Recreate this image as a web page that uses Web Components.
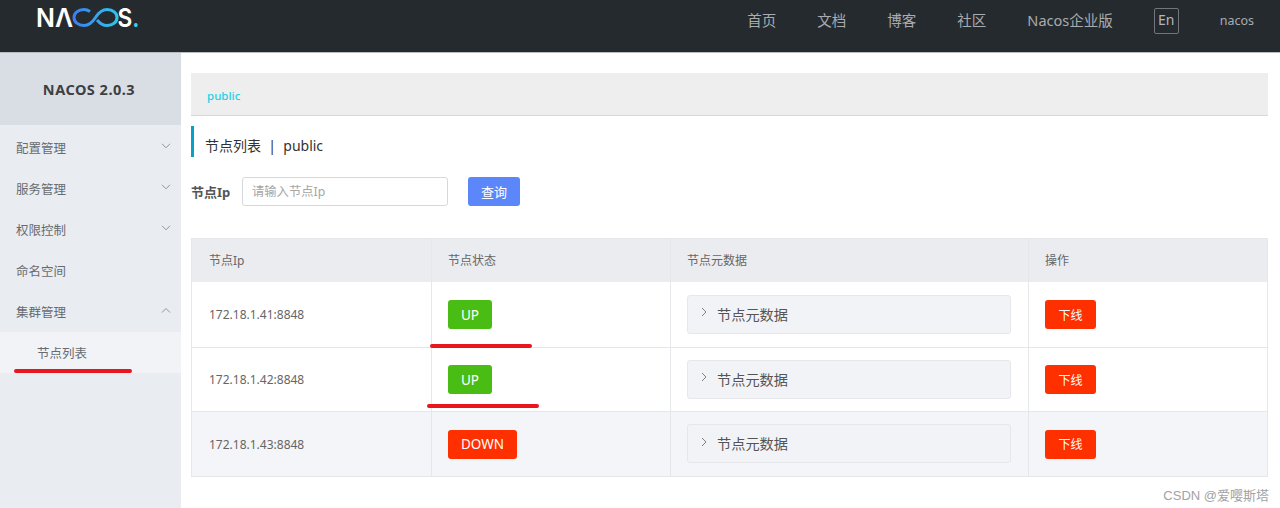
<!DOCTYPE html>
<html lang="zh-CN">
<head>
<meta charset="utf-8">
<title>Nacos</title>
<style>
  html, body { margin: 0; height: 100%; background: #fff; }
  body { font-family: "Noto Sans", "Noto Sans CJK SC", sans-serif; overflow: hidden; }
</style>
</head>
<body>
<nacos-app></nacos-app>

<script>
const CHEVRON = dir => `<svg width="10" height="6" viewBox="0 0 10 6" fill="none" stroke="#8f959c" stroke-width="1">
  <path d="${dir === 'up' ? 'M1 5.5 5 1.5 9 5.5' : 'M1 .8 5 4.8 9 .8'}"/></svg>`

class NacosHeader extends HTMLElement {
  constructor () {
    super()
    this.attachShadow({ mode: 'open' })
  }

  connectedCallback () {
    this.shadowRoot.innerHTML = /* html */`
      <style>
        :host {
          display: flex;
          box-sizing: border-box;
          height: 53px;
          background: #252a2f;
          border-bottom: 1px solid #b9bcbf;
          color: #a9acaf;
          font-size: 14.5px;
          line-height: 20px;
        }
        .logo { margin: 7px 0 0 36px; width: 102px; height: 24px; display: block; overflow: visible; }
        .logo text { font-family: Inter, sans-serif; font-size: 26px; font-weight: 600; fill: #fff; }
        .logo .dot { fill: #2fd3e6; }
        nav { display: flex; margin: 10px 0 0 auto; padding-right: 26px; }
        a { margin-right: 41px; white-space: nowrap; }
        .en {
          box-sizing: border-box;
          width: 25px;
          height: 26px;
          margin: -2px 41px 0 0;
          border: 1px solid #72767a;
          border-radius: 2px;
          text-align: center;
          font-size: 14px;
          line-height: 22px;
          color: #b3b6b8;
        }
        .user { font-size: 12.5px; margin-top: 1px; }
      </style>
      <svg class="logo" viewBox="0 0 102 24">
        <defs>
          <linearGradient id="inf" gradientUnits="userSpaceOnUse" x1="38" x2="81" y1="0" y2="0">
            <stop offset="0" stop-color="#3b7ff2"/>
            <stop offset="1" stop-color="#2fc6ea"/>
          </linearGradient>
        </defs>
        <text x="0" y="20" textLength="37" lengthAdjust="spacingAndGlyphs">NΛ</text>
        <path d="M54 4.500C52 3.200 50 2.500 48 2.500 42 2.500 38 6 38 10.500S42 18.500 48 18.500C53 18.500 56 16 59.500 10.500 63 5 66 2.500 71 2.500 77 2.500 81 6 81 10.500S77 18.500 71 18.500C66 18.500 63.500 16 61 13"
          fill="none" stroke="url(#inf)" stroke-width="3"/>
        <text x="81.500" y="20" textLength="22" lengthAdjust="spacingAndGlyphs">S<tspan class="dot">.</tspan></text>
      </svg>
      <nav>
        <a>首页</a><a>文档</a><a>博客</a><a>社区</a>
        <a>Nacos企业版</a>
        <span class="en">En</span>
        <span class="user">nacos</span>
      </nav>
    `
  }
}

class SideItem extends HTMLElement {
  constructor () {
    super()
    this.attachShadow({ mode: 'open' })
  }

  connectedCallback () {
    const arrow = this.getAttribute('arrow')
    this.shadowRoot.innerHTML = /* html */`
      <style>
        :host {
          display: flex;
          align-items: center;
          justify-content: space-between;
          box-sizing: border-box;
          height: 41px;
          padding: 0 10px 1px 16px;
          font-size: 12.5px;
          color: #666b70;
        }
        :host([sub]) { padding-left: 37px; background: #f2f3f7; }
        svg { margin-top: -3px; }
      </style>
      <slot></slot>
      ${arrow ? CHEVRON(arrow) : ''}
    `
  }
}

class NacosSidebar extends HTMLElement {
  constructor () {
    super()
    this.attachShadow({ mode: 'open' })
  }

  connectedCallback () {
    this.shadowRoot.innerHTML = /* html */`
      <style>
        :host {
          display: block;
          flex: none;
          width: 181px;
          background: #e9edf2;
        }
        .version {
          box-sizing: border-box;
          height: 72px;
          padding-right: 3px;
          background: #d9dee4;
          text-align: center;
          font-size: 14.5px;
          font-weight: 700;
          line-height: 73px;
          letter-spacing: .5px;
          color: #3d4043;
        }
        .menu { margin-top: 2px; }
      </style>
      <div class="version">NACOS 2.0.3</div>
      <div class="menu">
        <side-item arrow="down">配置管理</side-item>
        <side-item arrow="down">服务管理</side-item>
        <side-item arrow="down">权限控制</side-item>
        <side-item>命名空间</side-item>
        <side-item arrow="up">集群管理</side-item>
        <side-item sub>节点列表</side-item>
      </div>
    `
  }
}

class CrumbBar extends HTMLElement {
  constructor () {
    super()
    this.attachShadow({ mode: 'open' })
  }

  connectedCallback () {
    this.shadowRoot.innerHTML = /* html */`
      <style>
        :host {
          display: flex;
          align-items: center;
          box-sizing: border-box;
          height: 43px;
          padding: 3px 0 0 16px;
          background: #eeeeee;
          border-bottom: 1px solid #d9d9d9;
          font-size: 11.5px;
          font-weight: 500;
          color: #1fd0e6;
        }
      </style>
      <slot></slot>
    `
  }
}

class PageTitle extends HTMLElement {
  constructor () {
    super()
    this.attachShadow({ mode: 'open' })
  }

  connectedCallback () {
    this.shadowRoot.innerHTML = /* html */`
      <style>
        :host {
          display: flex;
          align-items: center;
          box-sizing: border-box;
          height: 31px;
          margin-top: 10px;
          padding: 6px 0 0 11px;
          border-left: 3px solid #09a0c8;
          font-size: 14px;
          color: #333;
        }
        slot { white-space: pre; }
      </style>
      <slot></slot>
    `
  }
}

class SearchForm extends HTMLElement {
  constructor () {
    super()
    this.attachShadow({ mode: 'open' })
  }

  connectedCallback () {
    this.shadowRoot.innerHTML = /* html */`
      <style>
        :host {
          display: flex;
          align-items: center;
          height: 29px;
          margin-top: 20px;
          font-size: 12.3px;
        }
        label { width: 51px; font-size: 13px; font-weight: 700; color: #555; }
        .input {
          box-sizing: border-box;
          width: 206px;
          height: 29px;
          padding-left: 9px;
          border: 1px solid #d6d8de;
          border-radius: 3px;
          line-height: 27px;
          color: #a6a6a6;
        }
        button {
          box-sizing: border-box;
          width: 52px;
          height: 29px;
          margin-left: 20px;
          padding: 0;
          border: 0;
          border-radius: 3px;
          background: #5b87fb;
          color: #fff;
          font: inherit;
          font-size: 13px;
        }
      </style>
      <label>节点Ip</label>
      <div class="input">请输入节点Ip</div>
      <button>查询</button>
    `
  }
}

class StatusTag extends HTMLElement {
  constructor () {
    super()
    this.attachShadow({ mode: 'open' })
  }

  connectedCallback () {
    this.shadowRoot.innerHTML = /* html */`
      <style>
        :host {
          display: inline-flex;
          align-items: center;
          box-sizing: border-box;
          height: 29px;
          padding: 0 13px;
          border-radius: 3px;
          background: #ff3000;
          color: #fff;
          font-size: 13.5px;
        }
        :host([state="up"]) { background: #4abd14; }
        :host([small]) { padding: 0 13.5px; font-size: 12px; }
      </style>
      <slot></slot>
    `
  }
}

class MetaCollapse extends HTMLElement {
  constructor () {
    super()
    this.attachShadow({ mode: 'open' })
  }

  connectedCallback () {
    this.shadowRoot.innerHTML = /* html */`
      <style>
        :host {
          display: flex;
          align-items: center;
          gap: 10px;
          box-sizing: border-box;
          height: 39px;
          padding: 0 0 1px 13px;
          background: #f2f3f7;
          border: 1px solid #e6e7eb;
          border-radius: 3px;
          font-size: 14.2px;
          color: #555;
        }
        svg { margin-top: -3px; }
      </style>
      <svg width="6" height="10" viewBox="0 0 6 10" fill="none" stroke="#7d8186" stroke-width="1">
        <path d="M1 1 5 5 1 9"/>
      </svg>
      <slot></slot>
    `
  }
}

class NodeRow extends HTMLElement {
  constructor () {
    super()
    this.attachShadow({ mode: 'open' })
  }

  connectedCallback () {
    this.shadowRoot.innerHTML = /* html */`
      <style>
        :host {
          display: grid;
          grid-template-columns: 239px 239px 358px 1fr;
          border-bottom: 1px solid #e6e7eb;
          font-size: 12px;
          color: #666;
        }
        :host([head]) { background: #ebecf0; border-bottom: 0; --cell-pb: 2px; }
        :host([alt]) { background: #f4f5f8; }
      </style>
      <slot></slot>
    `
  }
}

class NodeCell extends HTMLElement {
  constructor () {
    super()
    this.attachShadow({ mode: 'open' })
  }

  connectedCallback () {
    this.shadowRoot.innerHTML = /* html */`
      <style>
        :host {
          display: flex;
          align-items: center;
          box-sizing: border-box;
          min-width: 0;
          height: var(--row-h, 64px);
          padding: 0 16px var(--cell-pb, 0);
          border-left: 1px solid #e6e7eb;
        }
        :host(:first-child) { border-left: 0; padding-left: 17px; }
        ::slotted(meta-collapse) { flex: 1; margin: 0 1px 1px 0; }
      </style>
      <slot></slot>
    `
  }
}

class NodeTable extends HTMLElement {
  constructor () {
    super()
    this.attachShadow({ mode: 'open' })
  }

  connectedCallback () {
    const nodes = [
      ['172.18.1.41:8848', 'up', 'UP', 65],
      ['172.18.1.42:8848', 'up', 'UP', 63],
      ['172.18.1.43:8848', 'down', 'DOWN', 64]
    ]
    const rows = nodes.map((n, i) => /* html */`
      <node-row ${i === 2 ? 'alt' : ''} style="--row-h:${n[3]}px">
        <node-cell>${n[0]}</node-cell>
        <node-cell><status-tag state="${n[1]}">${n[2]}</status-tag></node-cell>
        <node-cell><meta-collapse>节点元数据</meta-collapse></node-cell>
        <node-cell><status-tag small>下线</status-tag></node-cell>
      </node-row>`).join('')
    this.shadowRoot.innerHTML = /* html */`
      <style>
        :host {
          display: block;
          box-sizing: border-box;
          width: 1077px;
          margin: 32px 0 0 0;
          border: 1px solid #e6e7eb;
          border-bottom: 0;
        }
      </style>
      <node-row head style="--row-h:43px">
        <node-cell>节点Ip</node-cell>
        <node-cell>节点状态</node-cell>
        <node-cell>节点元数据</node-cell>
        <node-cell>操作</node-cell>
      </node-row>
      ${rows}
    `
  }
}

class RedMark extends HTMLElement {
  constructor () {
    super()
    this.attachShadow({ mode: 'open' })
  }

  connectedCallback () {
    this.shadowRoot.innerHTML = /* html */`
      <style>
        :host {
          position: absolute;
          height: 4px;
          border-radius: 2px;
          background: #e8161d;
        }
      </style>
    `
  }
}

class NacosApp extends HTMLElement {
  constructor () {
    super()
    this.attachShadow({ mode: 'open' })
  }

  connectedCallback () {
    this.shadowRoot.innerHTML = /* html */`
      <style>
        :host {
          display: flex;
          flex-direction: column;
          position: relative;
          height: 508px;
          overflow: hidden;
        }
        .body { display: flex; flex: 1; min-height: 0; }
        main { flex: 1; padding: 20px 12px 0 10px; }
        .watermark {
          position: absolute;
          right: 11px;
          bottom: 4px;
          font-size: 13px;
          color: #a3a3a3;
          font-family: "Liberation Sans", "Noto Sans CJK SC", sans-serif;
        }
      </style>
      <nacos-header></nacos-header>
      <div class="body">
        <nacos-sidebar></nacos-sidebar>
        <main>
          <crumb-bar>public</crumb-bar>
          <page-title>节点列表  |  public</page-title>
          <search-form></search-form>
          <node-table></node-table>
        </main>
      </div>
      <red-mark style="left:14px;top:369px;width:118px"></red-mark>
      <red-mark style="left:430px;top:344px;width:102px"></red-mark>
      <red-mark style="left:427px;top:404px;width:112px"></red-mark>
      <span class="watermark">CSDN @爱嘤斯塔</span>
    `
  }
}

customElements.define('nacos-header', NacosHeader)
customElements.define('side-item', SideItem)
customElements.define('nacos-sidebar', NacosSidebar)
customElements.define('crumb-bar', CrumbBar)
customElements.define('page-title', PageTitle)
customElements.define('search-form', SearchForm)
customElements.define('status-tag', StatusTag)
customElements.define('meta-collapse', MetaCollapse)
customElements.define('node-row', NodeRow)
customElements.define('node-cell', NodeCell)
customElements.define('node-table', NodeTable)
customElements.define('red-mark', RedMark)
customElements.define('nacos-app', NacosApp)
</script>
</body>
</html>
